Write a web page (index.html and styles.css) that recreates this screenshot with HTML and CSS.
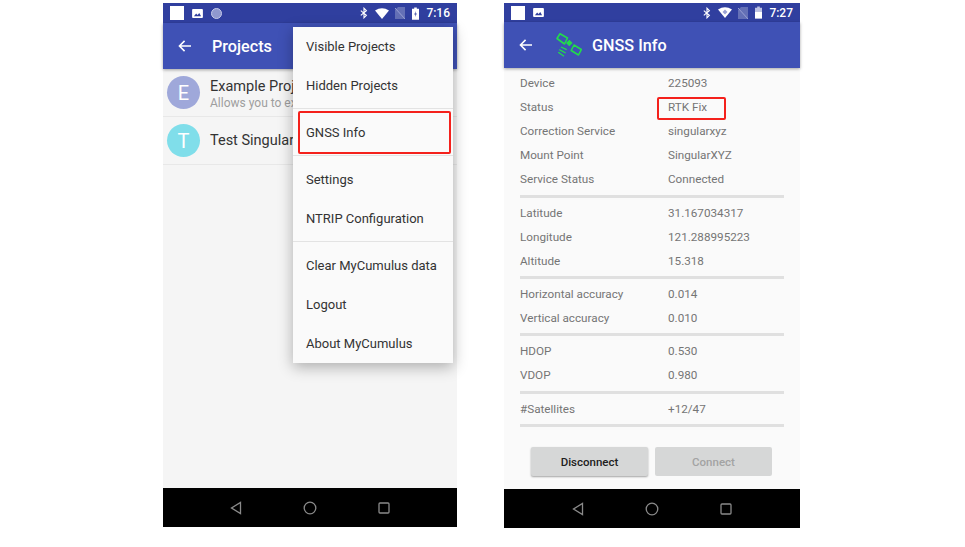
FILE: index.html
```html
<!DOCTYPE html>
<html>

<head>
	<meta charset="utf-8" />
	<title>MyCumulus</title>
	<link rel="stylesheet" href="styles.css">
</head>

<body>
	<div class="phone phone-left">
		<div class="statusbar">
			<span class="note-white"></span>
			<svg class="pic" viewBox="0 0 12 10"><path fill="#fff" d="M1 0h10a1 1 0 0 1 1 1v8a1 1 0 0 1-1 1H1a1 1 0 0 1-1-1V1a1 1 0 0 1 1-1z"/><path fill="#303f9f" d="M2 8l2.500-3 1.500 1.800L8 4.500 10 8z"/></svg>
			<span class="dot"></span>
			<span class="spacer"></span>
			<svg class="st-bt" viewBox="0 0 10 14"><path fill="none" stroke="#fff" stroke-width="1.400" d="M1 4l7 6-3 3V1l3 3-7 6"/></svg>
			<svg class="st-wifi" viewBox="0 0 14 11"><path fill="#fff" d="M0 2.500Q7-2 14 2.500L7 11z"/></svg>
			<svg class="st-sim" viewBox="0 0 10 12"><path fill="#6470b6" d="M3 0h7v12H0V3z"/><path stroke="#98a0d2" d="M0 1l10 11"/></svg>
			<svg class="st-batt" viewBox="0 0 8 14"><path fill="#fff" d="M2.500 0h3v1.500H8V14H0V1.500h2.500z"/><path fill="#303f9f" d="M4.500 4L2.500 8h1.500l-.5 3 2-4H4z"/></svg>
			<span class="clock">7:16</span>
		</div>
		<div class="appbar">
			<svg class="back" viewBox="0 0 16 14"><path fill="none" stroke="#fff" stroke-width="1.800" d="M15 7H2M7.500 1L1.500 7l6 6"/></svg>
			<span class="title">Projects</span>
		</div>
		<div class="content">
			<div class="project">
				<span class="avatar avatar-e">E</span>
				<div class="project-text">
					<div class="project-name">Example Project</div>
					<div class="project-sub">Allows you to explore</div>
				</div>
			</div>
			<div class="project">
				<span class="avatar avatar-t">T</span>
				<div class="project-name">Test Singular</div>
			</div>
		</div>
		<div class="navbar">
			<svg class="nav-icon" viewBox="0 0 14 14"><path fill="none" stroke="#8a8a8a" stroke-width="1.300" d="M11.500 1.500v11L2.500 7z"/></svg>
			<svg class="nav-icon" viewBox="0 0 14 14"><circle cx="7" cy="7" r="5.800" fill="none" stroke="#8a8a8a" stroke-width="1.300"/></svg>
			<svg class="nav-icon" viewBox="0 0 14 14"><rect x="2" y="2" width="10" height="10" rx="1" fill="none" stroke="#8a8a8a" stroke-width="1.300"/></svg>
		</div>

		<div class="menu">
			<div class="menu-group">
				<div class="menu-item">Visible Projects</div>
				<div class="menu-item">Hidden Projects</div>
			</div>
			<div class="menu-group">
				<div class="menu-item">GNSS Info</div>
			</div>
			<div class="menu-group">
				<div class="menu-item">Settings</div>
				<div class="menu-item">NTRIP Configuration</div>
			</div>
			<div class="menu-group">
				<div class="menu-item">Clear MyCumulus data</div>
				<div class="menu-item">Logout</div>
				<div class="menu-item">About MyCumulus</div>
			</div>
		</div>
		<div class="redbox redbox-menu"></div>
	</div>

	<div class="phone phone-right">
		<div class="statusbar">
			<span class="note-white"></span>
			<svg class="pic" viewBox="0 0 12 10"><path fill="#fff" d="M1 0h10a1 1 0 0 1 1 1v8a1 1 0 0 1-1 1H1a1 1 0 0 1-1-1V1a1 1 0 0 1 1-1z"/><path fill="#303f9f" d="M2 8l2.500-3 1.500 1.800L8 4.500 10 8z"/></svg>
			<span class="spacer"></span>
			<svg class="st-bt" viewBox="0 0 10 14"><path fill="none" stroke="#fff" stroke-width="1.400" d="M1 4l7 6-3 3V1l3 3-7 6"/></svg>
			<svg class="st-wifi" viewBox="0 0 14 11"><path fill="#fff" d="M0 2.500Q7-2 14 2.500L7 11z"/><path fill="#9aa2d4" d="M7 2.500l2.500 2.500L7 7.500 4.500 5z"/></svg>
			<svg class="st-sim" viewBox="0 0 10 12"><path fill="#6470b6" d="M3 0h7v12H0V3z"/><path stroke="#98a0d2" d="M0 1l10 11"/></svg>
			<svg class="st-batt" viewBox="0 0 8 14"><path fill="#bcc1e3" d="M2.500 0h3v1.500H8V6H0V1.500h2.500z"/><path fill="#fff" d="M0 6h8v8H0z"/></svg>
			<span class="clock">7:27</span>
		</div>
		<div class="appbar">
			<svg class="back" viewBox="0 0 16 14"><path fill="none" stroke="#fff" stroke-width="1.800" d="M15 7H2M7.500 1L1.500 7l6 6"/></svg>
			<svg class="gnss-icon" viewBox="0 0 26 24">
				<path fill="none" stroke="#22dc4a" stroke-width="1.600" stroke-linejoin="round" d="M4 .8l7.500 4.200-3 6-7.500-5.500zM18 12l7.300 4.500-2.800 5.500-7.300-4.500z"/>
				<path fill="#22dc4a" d="M13.300 6.700l3.300 3.300-3.300 3.300L10 10z"/>
				<path fill="none" stroke="#22dc4a" stroke-width="1.300" d="M5 14l5.700 2.700M3.300 16.700l6.400 3.300M2.300 19.300L8 23.300"/>
			</svg>
			<span class="title">GNSS Info</span>
		</div>
		<div class="content info">
			<div class="info-group info-group-first">
				<div class="info-row"><span class="info-key">Device</span><span>225093</span></div>
				<div class="info-row"><span class="info-key">Status</span><span>RTK Fix</span></div>
				<div class="info-row"><span class="info-key">Correction Service</span><span>singularxyz</span></div>
				<div class="info-row"><span class="info-key">Mount Point</span><span>SingularXYZ</span></div>
				<div class="info-row"><span class="info-key">Service Status</span><span>Connected</span></div>
			</div>
			<div class="info-group">
				<div class="info-row"><span class="info-key">Latitude</span><span>31.167034317</span></div>
				<div class="info-row"><span class="info-key">Longitude</span><span>121.288995223</span></div>
				<div class="info-row"><span class="info-key">Altitude</span><span>15.318</span></div>
			</div>
			<div class="info-group">
				<div class="info-row"><span class="info-key">Horizontal accuracy</span><span>0.014</span></div>
				<div class="info-row"><span class="info-key">Vertical accuracy</span><span>0.010</span></div>
			</div>
			<div class="info-group info-group-dop">
				<div class="info-row"><span class="info-key">HDOP</span><span>0.530</span></div>
				<div class="info-row"><span class="info-key">VDOP</span><span>0.980</span></div>
			</div>
			<div class="info-group">
				<div class="info-row"><span class="info-key">#Satellites</span><span>+12/47</span></div>
			</div>
			<div class="buttons">
				<button class="btn btn-on">Disconnect</button>
				<button class="btn btn-off">Connect</button>
			</div>
		</div>
		<div class="navbar">
			<svg class="nav-icon" viewBox="0 0 14 14"><path fill="none" stroke="#8a8a8a" stroke-width="1.300" d="M11.500 1.500v11L2.500 7z"/></svg>
			<svg class="nav-icon" viewBox="0 0 14 14"><circle cx="7" cy="7" r="5.800" fill="none" stroke="#8a8a8a" stroke-width="1.300"/></svg>
			<svg class="nav-icon" viewBox="0 0 14 14"><rect x="2" y="2" width="10" height="10" rx="1" fill="none" stroke="#8a8a8a" stroke-width="1.300"/></svg>
		</div>
		<div class="redbox redbox-status"></div>
	</div>
</body>

</html>
```

FILE: styles.css
```css
html, body {
	height: 100%;
	overflow: hidden;
}

body {
	margin: 0;
	padding: 3px 0 0 163px;
	box-sizing: border-box;
	display: flex;
	align-items: flex-start;
	gap: 47px;
	background-color: #fff;
	font: normal 12px Roboto, "Liberation Sans", sans-serif;
	color: #212121;
}

.phone {
	position: relative;
	display: flex;
	flex-direction: column;
	width: 294px;
	height: 524px;
	background-color: #f5f5f5;
}

.phone-right {
	width: 296px;
	height: 525px;
	background-color: #fafafa;
}

/* status bar */
.statusbar {
	display: flex;
	align-items: center;
	flex: none;
	height: 20px;
	padding: 0 7px;
	background-color: #303f9f;
	color: #fff;
}

.phone-right .statusbar {
	height: 19px;
}

.note-white {
	width: 14px;
	height: 14px;
	background-color: #fff;
	margin-right: 8px;
}

.pic {
	width: 11px;
	height: 9px;
	margin-right: 8px;
}

.dot {
	width: 11px;
	height: 11px;
	border-radius: 50%;
	background-color: #8f98cf;
	border: 1px solid #c5cae9;
	box-sizing: border-box;
}

.spacer {
	flex: 1;
}

.st-bt {
	width: 8px;
	height: 12px;
	margin-right: 7px;
}

.st-wifi {
	width: 14px;
	height: 11px;
	margin-right: 6px;
}

.st-sim {
	width: 10px;
	height: 12px;
	margin-right: 7px;
}

.st-batt {
	width: 7px;
	height: 13px;
	margin-right: 7px;
}

.clock {
	font-size: 12px;
	font-weight: 500;
}

/* app bar */
.appbar {
	display: flex;
	align-items: center;
	flex: none;
	height: 46px;
	padding-left: 15px;
	background-color: #3f51b5;
	box-shadow: 0 1px 3px rgba(0, 0, 0, .35);
	color: #fff;
	position: relative;
}

.back {
	width: 14px;
	height: 12px;
	margin-right: 20px;
}

.title {
	font-size: 16.200px;
	font-weight: 500;
}

.gnss-icon {
	width: 26px;
	height: 24px;
	margin: 0 10px 0 3px;
}

/* project list */
.content {
	flex: 1;
	min-height: 0;
}

.project {
	display: flex;
	align-items: center;
	gap: 10px;
	height: 47px;
	padding-left: 4px;
	border-bottom: 1px solid #e8e8e8;
	white-space: nowrap;
	overflow: hidden;
}

.project-text {
	padding-top: 3px;
}

.avatar {
	display: flex;
	align-items: center;
	justify-content: center;
	flex: none;
	width: 33px;
	height: 33px;
	border-radius: 50%;
	color: #fff;
	font-size: 20px;
}

.avatar-e {
	background-color: #9fa8da;
}

.avatar-t {
	background-color: #80deea;
}

.project-name {
	font-size: 14.500px;
	line-height: 19px;
	color: #333;
}

.project-sub {
	font-size: 12px;
	line-height: 15px;
	color: #9e9e9e;
}

/* overflow menu */
.menu {
	position: absolute;
	left: 130px;
	top: 24px;
	width: 160px;
	background-color: #fafafa;
	box-shadow: 0 4px 14px rgba(0, 0, 0, .3);
}

.menu-group {
	padding: 0 0 3px;
	border-bottom: 1px solid #e3e3e3;
	margin-bottom: 4px;
}

.menu-group:last-child {
	border-bottom: 0;
	padding: 0;
	margin: 0;
}

.menu-item {
	height: 39px;
	line-height: 39px;
	padding-left: 13px;
	font-size: 13px;
	color: #333;
	white-space: nowrap;
}

.redbox {
	position: absolute;
	border: 2px solid #f4211c;
	border-radius: 2px;
	box-sizing: border-box;
}

.redbox-menu {
	left: 135px;
	top: 108px;
	width: 153px;
	height: 43px;
}

.redbox-status {
	left: 153px;
	top: 94px;
	width: 69px;
	height: 23px;
}

/* gnss info */
.info {
	padding: 3px 16px 0;
	font-size: 11.700px;
	color: #757575;
}

.info-group {
	padding-bottom: 3px;
	border-bottom: 3px solid #e0e0e0;
	margin-bottom: 3px;
}

.info-group-first {
	padding-bottom: 4px;
}

.info-group-dop {
	padding-bottom: 4px;
}

.info-row {
	display: grid;
	grid-template-columns: 148px 1fr;
	height: 24px;
	line-height: 24px;
}

.buttons {
	display: flex;
	gap: 7px;
	padding-left: 11px;
	margin-top: 20px;
}

.btn {
	width: 117px;
	height: 29px;
	border: 0;
	border-radius: 2px;
	background-color: #d6d7d7;
	font: 500 11.500px Roboto, "Liberation Sans", sans-serif;
	padding: 0;
}

.btn-on {
	color: #212121;
	box-shadow: 0 1px 2px rgba(0, 0, 0, .35);
}

.btn-off {
	color: #a3a3a3;
}

/* nav bar */
.navbar {
	display: flex;
	align-items: center;
	justify-content: center;
	gap: 60px;
	flex: none;
	height: 39px;
	background-color: #000;
}

.nav-icon {
	width: 14px;
	height: 14px;
}
```
